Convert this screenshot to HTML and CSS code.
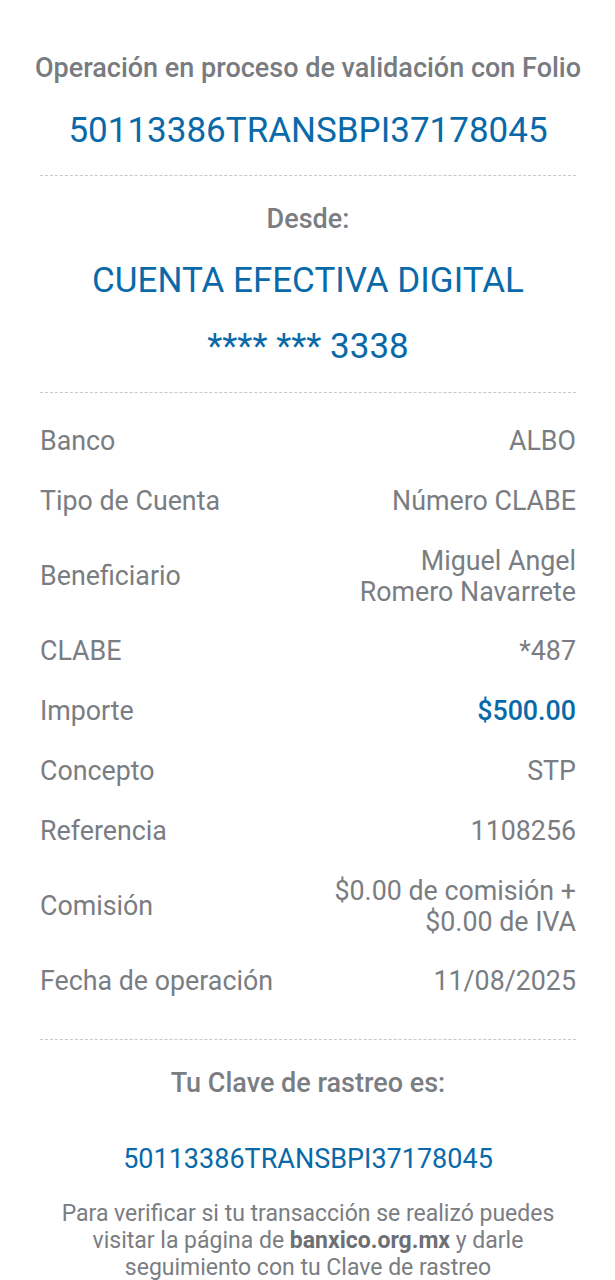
FILE: index.html
```html
<!DOCTYPE html>
<html lang="es">
<head>
<meta charset="utf-8">
<title>Comprobante</title>
<link rel="stylesheet" href="styles.css">
</head>
<body>
<main class="receipt">
  <section class="head">
    <h1 class="title">Operación en proceso de validación con Folio</h1>
    <p class="folio">50113386TRANSBPI37178045</p>
  </section>
  <hr class="dash">
  <section class="from">
    <h2 class="from-label">Desde:</h2>
    <p class="account">CUENTA EFECTIVA DIGITAL</p>
    <p class="masked">**** *** 3338</p>
  </section>
  <hr class="dash">
  <section class="details">
    <div class="row"><span class="k">Banco</span><span class="v">ALBO</span></div>
    <div class="row"><span class="k">Tipo de Cuenta</span><span class="v">Número CLABE</span></div>
    <div class="row two"><span class="k">Beneficiario</span><span class="v">Miguel Angel<br>Romero Navarrete</span></div>
    <div class="row"><span class="k">CLABE</span><span class="v">*487</span></div>
    <div class="row"><span class="k">Importe</span><span class="v blue">$500.00</span></div>
    <div class="row"><span class="k">Concepto</span><span class="v">STP</span></div>
    <div class="row"><span class="k">Referencia</span><span class="v">1108256</span></div>
    <div class="row two"><span class="k">Comisión</span><span class="v">$0.00 de comisión +<br>$0.00 de IVA</span></div>
    <div class="row"><span class="k">Fecha de operación</span><span class="v">11/08/2025</span></div>
  </section>
  <hr class="dash">
  <section class="track">
    <h2 class="track-label">Tu Clave de rastreo es:</h2>
    <p class="track-code">50113386TRANSBPI37178045</p>
    <p class="note">Para verificar si tu transacción se realizó puedes visitar la página de <b>banxico.org.mx</b> y darle seguimiento con tu Clave de rastreo</p>
  </section>
</main>
</body>
</html>
```
FILE: styles.css
```css
* { box-sizing: border-box; }
html, body { margin: 0; padding: 0; background: #ffffff; }
body {
  font-family: Roboto, "Liberation Sans", Arial, sans-serif;
  color: #7a7d82;
}
.receipt {
  width: 615px;
  padding: 0 39px 0 40px;
  display: flex;
  flex-direction: column;
}
p, h1, h2 { margin: 0; }
.folio, .account, .masked, .track-code { color: #0a6aa9; }

.head {
  display: flex;
  flex-direction: column;
  align-items: center;
  padding: 52px 0 24px;
}
.title {
  font-size: 27px;
  font-weight: 500;
  line-height: 32px;
  white-space: nowrap;
  color: #787b80;
}
.folio {
  margin-top: 27px;
  font-size: 35px;
  line-height: 40px;
}
.dash {
  border: 0;
  border-top: 1px dashed #c6c8ca;
  margin: 0;
  height: 0;
}
.from {
  display: flex;
  flex-direction: column;
  align-items: center;
  padding: 27px 0 25px;
}
.from-label {
  font-size: 27px;
  font-weight: 500;
  line-height: 32px;
}
.account {
  margin-top: 26px;
  font-size: 35px;
  line-height: 40px;
}
.masked {
  margin-top: 26px;
  font-size: 35px;
  line-height: 40px;
}
.details {
  display: flex;
  flex-direction: column;
  padding: 33px 0 42px;
  gap: 28.8px;
}
.row {
  display: flex;
  justify-content: space-between;
  align-items: center;
  font-size: 26.8px;
  line-height: 31px;
}
.row .v { text-align: right; }
.row .blue { color: #0a6aa9; font-weight: 500; }
.track {
  display: flex;
  flex-direction: column;
  align-items: center;
  padding-top: 27px;
}
.track-label {
  font-size: 27px;
  font-weight: 500;
  line-height: 32px;
}
.track-code {
  margin-top: 44px;
  font-size: 27px;
  line-height: 32px;
}
.note {
  margin-top: 25px;
  font-size: 23px;
  line-height: 27px;
  text-align: center;
  width: 520px;
}
.note b { font-weight: 700; color: #6c6f74; line-height: 1; }
```
